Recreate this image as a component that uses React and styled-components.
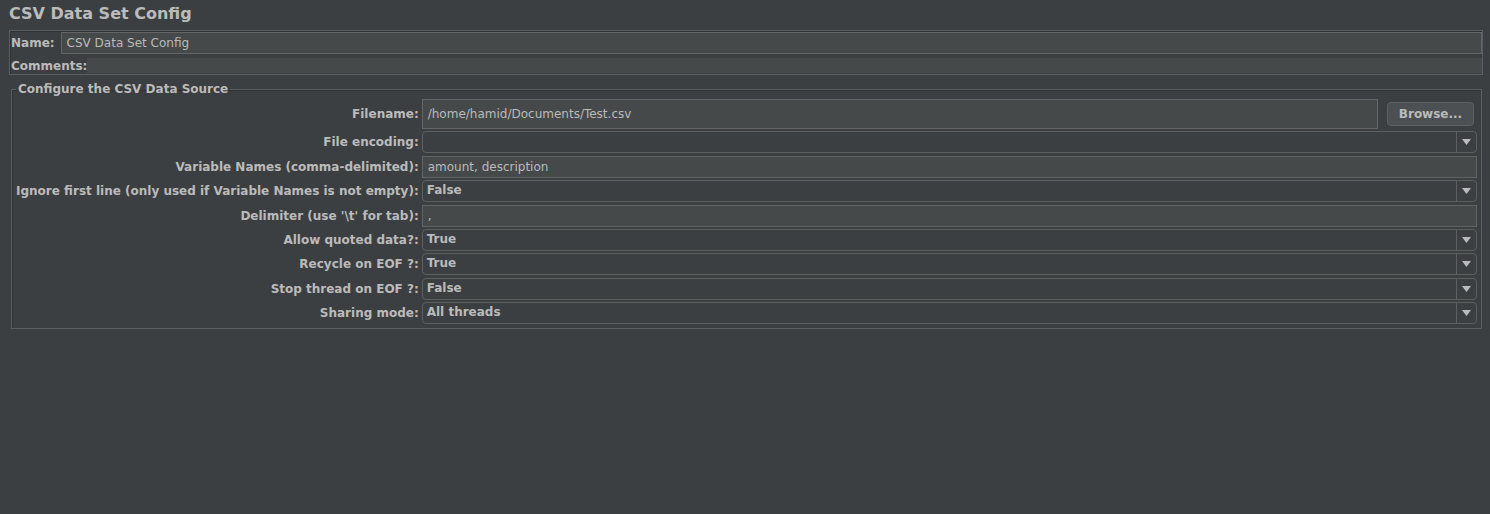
import React from 'react'
import styled, { createGlobalStyle } from 'styled-components'

const GlobalStyle = createGlobalStyle`
  html, body {
    margin: 0;
    padding: 0;
    background: #3c3f41;
    font-family: "DejaVu Sans", "Liberation Sans", sans-serif;
    color: #bbbbbb;
  }
  #root {
    min-height: 514px;
  }
`

const rows = [
  { label: 'File encoding:', kind: 'combo', value: '' },
  { label: 'Variable Names (comma-delimited):', kind: 'text', value: 'amount, description' },
  { label: 'Ignore first line (only used if Variable Names is not empty):', kind: 'combo', value: 'False' },
  { label: "Delimiter (use '\\t' for tab):", kind: 'text', value: ',' },
  { label: 'Allow quoted data?:', kind: 'combo', value: 'True' },
  { label: 'Recycle on EOF ?:', kind: 'combo', value: 'True' },
  { label: 'Stop thread on EOF ?:', kind: 'combo', value: 'False' },
  { label: 'Sharing mode:', kind: 'combo', value: 'All threads' },
]

const App = () => {
  return (
    <>
      <GlobalStyle />
      <Page>
        <Title>CSV Data Set Config</Title>
        <NamePanel>
          <NameRow>
            <PanelLabel>Name:</PanelLabel>
            <NameField>CSV Data Set Config</NameField>
          </NameRow>
          <CommentsRow>
            <PanelLabel>Comments:</PanelLabel>
            <CommentsField />
          </CommentsRow>
        </NamePanel>
        <Group>
          <Legend>Configure the CSV Data Source</Legend>
          <FormGrid>
            <Label>Filename:</Label>
            <FileRow>
              <TextField $tall>/home/hamid/Documents/Test.csv</TextField>
              <Button>Browse...</Button>
            </FileRow>
            {rows.map((row) => (
              <React.Fragment key={row.label}>
                <Label>{row.label}</Label>
                {row.kind === 'text' ? (
                  <TextField>{row.value}</TextField>
                ) : (
                  <Combo>
                    <ComboValue>{row.value}</ComboValue>
                    <ComboArrow>
                      <svg width="9" height="6" viewBox="0 0 9 6">
                        <path d="M0 0 H9 L4.5 6 Z" fill="#bbbbbb" />
                      </svg>
                    </ComboArrow>
                  </Combo>
                )}
              </React.Fragment>
            ))}
          </FormGrid>
        </Group>
      </Page>
    </>
  )
}

export default App

//style
const Page = styled.div`
  display: flex;
  flex-direction: column;
  padding: 3px 7px 0 9px;
`

const Title = styled.div`
  font-size: 16px;
  font-weight: bold;
  line-height: 22px;
  color: #bbbbbb;
  margin-bottom: 5px;
`

const NamePanel = styled.div`
  display: flex;
  flex-direction: column;
  border: 1px solid #5b5e60;
  box-shadow: inset 1px 1px 0 #2f3133;
  padding: 1px 0 1px 0;
`

const NameRow = styled.div`
  display: flex;
  align-items: center;
  gap: 6px;
  height: 22px;
`

const CommentsRow = styled.div`
  display: flex;
  align-items: center;
  margin-top: 4px;
  height: 15px;
`

const PanelLabel = styled.span`
  font-size: 12px;
  font-weight: bold;
  padding-left: 1px;
  white-space: nowrap;
`

const NameField = styled.div`
  flex: 1;
  box-sizing: border-box;
  height: 22px;
  border: 1px solid #646464;
  background: #45494a;
  font-size: 12px;
  line-height: 20px;
  padding-left: 5px;
`

const CommentsField = styled.div`
  flex: 1;
  align-self: stretch;
  background: #45494a;
`

const Group = styled.fieldset`
  margin: 7px 1px 0 2px;
  padding: 0 4px 4px 4px;
  border: 1px solid #5b5e60;
  box-shadow: inset 1px 1px 0 #2f3133;
`

const Legend = styled.legend`
  font-size: 12px;
  font-weight: bold;
  line-height: 15px;
  padding: 0 2px;
`

const FormGrid = styled.div`
  display: grid;
  grid-template-columns: auto 1fr;
  column-gap: 3px;
  row-gap: 2.4px;
  align-items: center;
  padding-top: 2px;
`

const Label = styled.div`
  font-size: 12px;
  font-weight: bold;
  text-align: right;
  white-space: nowrap;
`

const FileRow = styled.div`
  display: flex;
  align-items: center;
  gap: 9px;
`

const TextField = styled.div`
  flex: 1;
  box-sizing: border-box;
  height: ${(p) => (p.$tall ? '30px' : '22px')};
  line-height: ${(p) => (p.$tall ? '28px' : '20px')};
  border: 1px solid #646464;
  background: #45494a;
  font-size: 12px;
  padding-left: 5px;
  white-space: nowrap;
`

const Button = styled.div`
  box-sizing: border-box;
  width: 87px;
  height: 24px;
  margin-right: 3px;
  border: 1px solid #5e6060;
  border-radius: 4px;
  background: #4c5052;
  font-size: 12px;
  font-weight: bold;
  line-height: 22px;
  text-align: center;
`

const Combo = styled.div`
  display: flex;
  box-sizing: border-box;
  height: 22px;
  border: 1px solid #5e6060;
  border-radius: 4px;
  background: #3c3f41;
`

const ComboValue = styled.div`
  flex: 1;
  font-size: 12px;
  font-weight: bold;
  line-height: 19px;
  padding-left: 4px;
`

const ComboArrow = styled.div`
  display: flex;
  align-items: center;
  justify-content: center;
  width: 19px;
  border-left: 1px solid #5e6060;
`
